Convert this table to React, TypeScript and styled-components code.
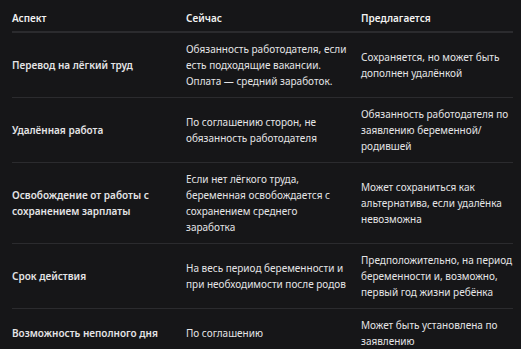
import * as React from 'react';
import styled, { createGlobalStyle } from 'styled-components';

const GlobalStyle = createGlobalStyle`
  html, body {
    margin: 0;
    padding: 0;
    background: #161618;
  }
`;

const Page = styled.div`
  padding: 2px 8px 0 12px;
  font-family: 'Noto Sans', 'Open Sans', sans-serif;
  font-size: 10px;
  line-height: 16px;
  color: #e4e4e6;
  background: #161618;
  min-height: 349px;
  box-sizing: border-box;
`;

const Table = styled.div`
  display: grid;
  grid-template-columns: 174px 175px 1fr;
`;

const Cell = styled.div<{ $last?: boolean; $strong?: boolean }>`
  display: flex;
  align-items: center;
  padding: 8px ${(p) => (p.$last ? '0' : '12px')} 8px 0;
  border-bottom: 1px solid #2b2b2e;
  font-weight: ${(p) => (p.$strong ? 600 : 400)};
`;

const HeadCell = styled(Cell)`
  padding-top: 8px;
  padding-bottom: 5px;
  border-bottom-width: 2px;
  font-weight: 600;
  color: #f2f2f2;
`;

const rows: [string, string, string][] = [
  [
    'Перевод на лёгкий труд',
    'Обязанность работодателя, если есть подходящие вакансии. Оплата — средний заработок.',
    'Сохраняется, но может быть дополнен удалёнкой',
  ],
  [
    'Удалённая работа',
    'По соглашению сторон, не обязанность работодателя',
    'Обязанность работодателя по заявлению беременной/ родившей',
  ],
  [
    'Освобождение от работы с сохранением зарплаты',
    'Если нет лёгкого труда, беременная освобождается с сохранением среднего заработка',
    'Может сохраниться как альтернатива, если удалёнка невозможна',
  ],
  [
    'Срок действия',
    'На весь период беременности и при необходимости после родов',
    'Предположительно, на период беременности и, возможно, первый год жизни ребёнка',
  ],
  [
    'Возможность неполного дня',
    'По соглашению',
    'Может быть установлена по заявлению',
  ],
];

const App: React.FC = () => (
  <Page>
    <GlobalStyle />
    <Table>
      <HeadCell>Аспект</HeadCell>
      <HeadCell>Сейчас</HeadCell>
      <HeadCell $last>Предлагается</HeadCell>
      {rows.map(([aspect, now, proposed]) => (
        <React.Fragment key={aspect}>
          <Cell $strong>{aspect}</Cell>
          <Cell>{now}</Cell>
          <Cell $last>{proposed}</Cell>
        </React.Fragment>
      ))}
    </Table>
  </Page>
);

export default App;
